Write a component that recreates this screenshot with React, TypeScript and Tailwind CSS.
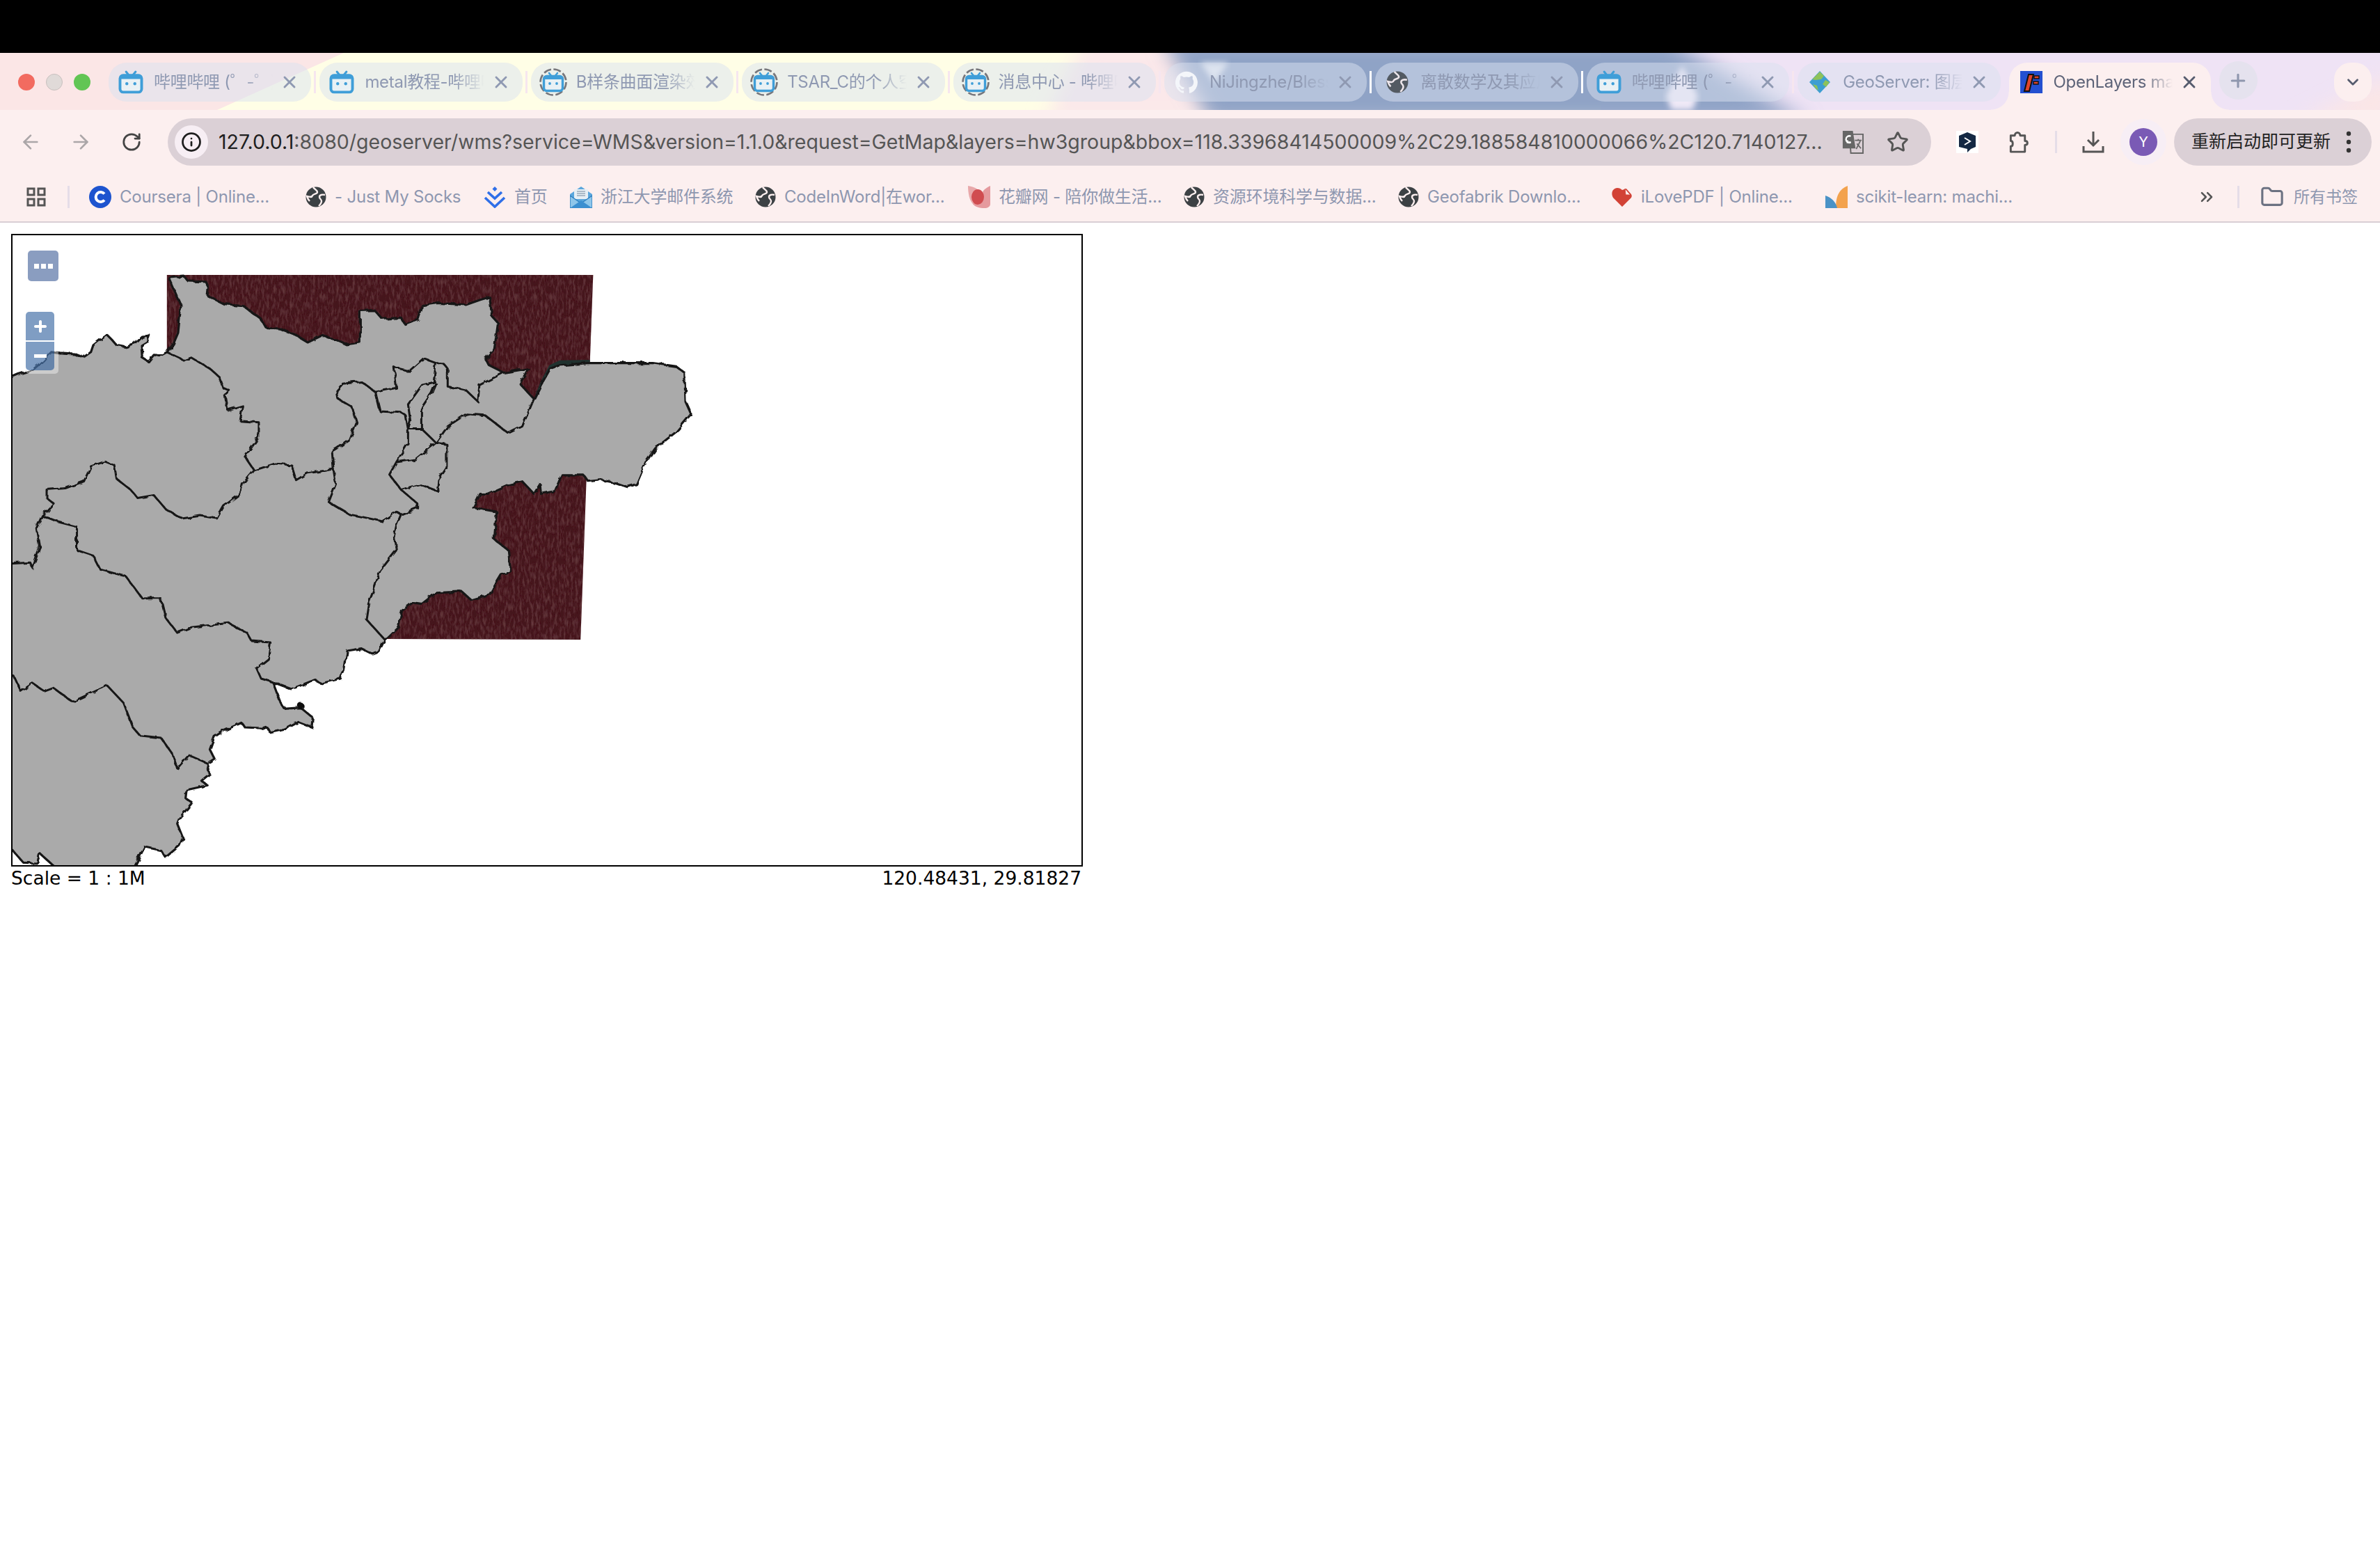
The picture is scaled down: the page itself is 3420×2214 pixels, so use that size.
import { ArrowLeft, ArrowRight, ChevronDown, ChevronsRight, Folder, Info, Plus, RotateCw, Star, X } from 'lucide-react';

const z5 = (s: string) =>
  s.split(' ').map((p) => {
    const [x, y] = p.split(',').map(Number);
    return `${(x / 1.4933).toFixed(1)},${(320 + y / 2.529).toFixed(1)}`;
  });

const z6 = (s: string) =>
  s.split(' ').map((p) => {
    const [x, y] = p.split(',').map(Number);
    return `${(x / 1.4933).toFixed(1)},${(800 + y / 3).toFixed(1)}`;
  });

const toPath = (pts: string[], close = false) => `M${pts.join(' L')}${close ? ' Z' : ''}`;

const landOutline = [
  ...z5(
    '5,575 40,550 70,535 90,505 110,470 130,475 160,478 178,490 195,470 200,445 215,425 230,408 240,425 250,445 270,452 290,440 305,415 322,412 318,430 303,445 305,490 318,505 330,480 345,482 358,470 372,440 382,400 385,350 388,300 375,250 362,200 395,195 402,210 440,212 447,235 445,265 480,295 520,300 560,350 570,380 600,385 630,405 660,435 690,410 720,425 742,442 772,435 772,320 803,318 820,350 860,345 868,368 895,350 905,300 940,292 1000,298 1030,280 1050,270 1055,340 1068,365 1060,460 1040,495 1050,520 1080,545 1133,530 1115,585 1145,640 1160,590 1180,530 1200,518 1260,510 1400,510 1450,522 1468,545 1470,650 1482,695 1450,760 1405,820 1385,870 1365,950 1345,960 1320,945 1290,935 1262,940 1250,915 1205,915 1190,975 1160,985 1158,950 1145,985 1120,940 1085,955 1045,985 1030,985 1015,1035 1065,1050 1060,1150 1090,1190 1095,1270 1075,1280 1050,1350 1010,1370 990,1340 935,1345 905,1385 885,1380 862,1410 855,1465 825,1515',
  ),
  ...z6(
    '812,410 800,420 775,395 745,405 738,490 730,525 690,545 675,530 625,570 585,540 600,620 610,655 645,650 672,695 670,735 640,712 610,745 580,758 575,740 525,735 518,715 480,750 460,775 450,830 460,870 445,890 450,935 432,965 445,985 400,1005 398,1040 412,1060 400,1090 385,1125 380,1150 392,1210 385,1245 355,1295 345,1265 310,1250 285,1350 125,1350 85,1278 80,1320 50,1318 25,1260 5,1255',
  ),
];

const borders = [
  z5('358,470 395,500 410,490 430,510 450,530 470,560 478,600 492,610 482,625 488,680 520,665 515,720 555,725 555,780 525,850 545,900'),
  z5('545,900 520,950 515,985 480,1030 465,1075 430,1065 390,1075 355,1040 330,990 295,1000 280,970 250,930 245,880 225,868 195,885 180,940 140,965 100,970 100,1000 115,1020 90,1065 78,1110 85,1180 70,1255 65,1235 5,1240'),
  [
    ...z5('90,1065 120,1085 165,1105 165,1190 200,1210 215,1260 270,1285 305,1365 345,1365 355,1435 380,1490 410,1470 490,1455 530,1490 540,1520 580,1525'),
    ...z6('575,440 550,480 560,525 585,540'),
  ],
  z6('5,505 30,515 45,580 70,545 95,580 115,565 155,625 230,555 265,630 285,735 300,770 345,780 370,850 380,912 405,855 445,890'),
  z5('545,900 590,875 625,880 635,935 660,910 700,900 715,895 712,830 750,790 765,725 755,670 725,640 722,610 735,585 775,578 805,615 850,600 845,525 880,540 910,495 935,510 950,510 960,530 960,595 1000,610 1025,650 1028,590 1080,545'),
  z5('715,895 720,950 705,1015 750,1060 780,1070 820,1085 850,1050 860,1060 895,1035 895,1020 860,970 835,915 850,870 890,860 935,800'),
  z5('860,1060 850,1100 845,1140 850,1190 815,1265 800,1340 790,1385 785,1440 825,1515'),
  z5('850,870 875,800 875,750 870,700 860,690 815,685 805,615'),
  z5('935,510 930,580 905,590 875,660 880,720 875,750 905,750 905,670 925,620 935,580'),
  z5('905,750 935,800 960,740 1000,695 1040,700 1090,765 1120,740 1145,640'),
  z5('935,800 958,805 958,890 940,935 938,975 900,950 860,970'),
];

function MapDrawing() {
  const raster = z5('358,190 1272,190 1265,510 1258,915 1245,1515 830,1512 358,1512');
  const river = z5('1145,640 1160,575 1178,518 1200,500 1265,498 1265,515 1190,525');
  return (
    <svg className="absolute inset-0 w-full h-full" viewBox="18 338 1535 905" preserveAspectRatio="none">
      <defs>
        <filter id="grain" x="0" y="0" width="100%" height="100%">
          <feTurbulence type="fractalNoise" baseFrequency="0.3 0.09" numOctaves="3" seed="4" />
          <feColorMatrix values="0 0 0 0 0.2  0 0 0 0 0.07  0 0 0 0 0.08  0 0 0 1.1 -0.45" />
          <feComposite in2="SourceGraphic" operator="in" />
          <feMerge>
            <feMergeNode in="SourceGraphic" />
            <feMergeNode />
          </feMerge>
        </filter>
        <filter id="wobble" x="-2%" y="-2%" width="104%" height="104%">
          <feTurbulence type="fractalNoise" baseFrequency="0.09" numOctaves="2" seed="7" result="n" />
          <feDisplacementMap in="SourceGraphic" in2="n" scale="6" />
          <feGaussianBlur stdDeviation="0.7" />
        </filter>
      </defs>
      <path d={toPath(raster, true)} fill="#44171e" filter="url(#grain)" />
      <path d={toPath(river, true)} fill="#20322f" />
      <g filter="url(#wobble)">
        <path d={toPath(landOutline, true)} fill="#aaaaaa" stroke="#161616" strokeWidth="3.2" strokeLinejoin="round" />
        {borders.map((b, i) => (
          <path key={i} d={toPath(b)} fill="none" stroke="#161616" strokeWidth="3" strokeLinejoin="round" />
        ))}
        <circle cx="432" cy="1014" r="4.5" fill="#111" />
      </g>
    </svg>
  );
}

function TvIcon({ ring = false }: { ring?: boolean }) {
  return (
    <svg viewBox="0 0 40 40" className={ring ? 'w-[40px] h-[40px] shrink-0' : 'w-[46px] h-[46px] shrink-0'}>
      {ring && (
        <circle cx="20" cy="20" r="18.5" fill="none" stroke="#77777c" strokeWidth="2.6" strokeDasharray="11 3.5" />
      )}
      <path d="M14 7l4 5M26 7l-4 5" stroke="#3f9ed8" strokeWidth="2.6" strokeLinecap="round" />
      <rect x="6.5" y="11.5" width="27" height="21" rx="4" fill="#e9f1f5" stroke="#3f9ed8" strokeWidth="3.4" />
      <rect x="6" y="11" width="28" height="5" rx="2.5" fill="#3f9ed8" />
      <circle cx="15" cy="22" r="1.9" fill="#3f9ed8" />
      <circle cx="25" cy="22" r="1.9" fill="#3f9ed8" />
    </svg>
  );
}

function GlobeIcon({ size = 'w-[30px] h-[30px]' }: { size?: string }) {
  return (
    <svg viewBox="0 0 30 30" className={`${size} shrink-0`}>
      <circle cx="15" cy="15" r="14.5" fill="#3c4144" />
      <path d="M11 1c2 3 6 4 6 7s-6 2-7 5-4 2-8 1c1 3 2 5 4 7" fill="none" stroke="#fcefef" strokeWidth="2.4" />
      <path d="M28 12c-4-1-8 0-8 3s3 3 3 6-2 5-4 7" fill="none" stroke="#fcefef" strokeWidth="2.4" />
    </svg>
  );
}

function GithubIcon() {
  return (
    <svg viewBox="0 0 24 24" className="w-[32px] h-[32px] shrink-0" fill="#f4f6fa">
      <path d="M12 .5a12 12 0 0 0-3.8 23.4c.6.1.8-.3.8-.6v-2.2c-3.3.7-4-1.400-4-1.400-.5-1.400-1.300-1.800-1.300-1.800-1.100-.7.1-.7.1-.7 1.200.1 1.800 1.200 1.800 1.200 1.100 1.800 2.800 1.300 3.500 1 .1-.8.4-1.300.8-1.600-2.700-.3-5.500-1.300-5.500-5.900 0-1.300.5-2.400 1.200-3.200-.1-.3-.5-1.500.1-3.200 0 0 1-.3 3.300 1.200a11.500 11.500 0 0 1 6 0c2.300-1.500 3.300-1.200 3.300-1.200.6 1.700.2 2.900.1 3.200.8.800 1.200 1.900 1.200 3.200 0 4.600-2.800 5.600-5.500 5.900.4.400.8 1.100.8 2.200v3.300c0 .3.200.7.800.6A12 12 0 0 0 12 .5z" />
    </svg>
  );
}

function GeoServerIcon() {
  return (
    <svg viewBox="0 0 32 32" className="w-[32px] h-[32px] shrink-0">
      <path d="M16 0l15 16-15 16L1 16z" fill="#3d9ed2" />
      <path d="M16 1l6 6-4 5-8 1-5-1zM24 13l6 3-5 7-5-4zM6 19l6 2 2 7-4-3z" fill="#8ec25a" />
    </svg>
  );
}

function OpenLayersIcon() {
  return (
    <svg viewBox="0 0 32 32" className="w-[32px] h-[32px] shrink-0">
      <rect width="32" height="32" fill="#2450d0" />
      <path d="M6 29l6-24h7l-6 24z" fill="#e0452a" stroke="#111" strokeWidth="2" />
      <path d="M20 7h7v4h-7zM19 15h7v4h-7z" fill="#e0452a" stroke="#111" strokeWidth="1.400" />
    </svg>
  );
}

function CourseraIcon() {
  return (
    <svg viewBox="0 0 32 32" className="w-[32px] h-[32px] shrink-0">
      <circle cx="16" cy="16" r="16" fill="#1d54cf" />
      <path d="M22 11.500a7 7 0 1 0 0 9" fill="none" stroke="#fff" strokeWidth="4" />
    </svg>
  );
}

function HomeMarkIcon() {
  return (
    <svg viewBox="0 0 32 32" className="w-[32px] h-[32px] shrink-0">
      <path d="M16 1l3.500 3.500L16 8l-3.500-3.500z" fill="#2f6fe8" />
      <path d="M6 9l10 9 10-9M2 17l14 13 14-13" fill="none" stroke="#2f6fe8" strokeWidth="3.600" />
    </svg>
  );
}

function MailIcon() {
  return (
    <svg viewBox="0 0 32 32" className="w-[32px] h-[32px] shrink-0">
      <path d="M0 12L16 1l16 11v20H0z" fill="#5aa6dc" />
      <rect x="6" y="5" width="20" height="14" fill="#e6eff5" />
      <path d="M10 8h12M10 11h12M10 14h12" stroke="#99a9b8" strokeWidth="1.400" />
      <path d="M0 14l16 11 16-11v18H0z" fill="#8fc6ea" stroke="#2a7ec0" strokeWidth="1.400" />
      <path d="M0 32l16-11 16 11z" fill="#3c8fd0" />
    </svg>
  );
}

function PetalIcon() {
  return (
    <svg viewBox="0 0 32 32" className="w-[32px] h-[32px] shrink-0">
      <path d="M0 0c10 1 20 8 24 14S10 25 8 27C2 22 0 10 0 0z" fill="#e8a8aa" />
      <path d="M32 0v26c0 4-4 6-8 6-8 0-14-2-17-6 10-6 14-12 14-16 0-4 7-8 11-10z" fill="#e59a9e" />
      <ellipse cx="14" cy="16" rx="9" ry="11" fill="#d04c50" />
    </svg>
  );
}

function HeartIcon() {
  return (
    <svg viewBox="0 0 30 28" className="w-[30px] h-[28px] shrink-0">
      <path d="M15 28L2 15C-2 8 2 1 8 1c3 0 5 1 7 3l6-2 7 8c1 2 1 3 0 5z" fill="#d24236" />
      <path d="M19 2l8 9h-7z" fill="#fcefef" stroke="#d24236" strokeWidth="1" />
    </svg>
  );
}

function SklearnIcon() {
  return (
    <svg viewBox="0 0 32 32" className="w-[32px] h-[32px] shrink-0">
      <path d="M32 0C20 5 15 14 15 32h17z" fill="#f3a24d" />
      <path d="M0 14c9 3 15 9 17 18H0z" fill="#4a92c6" />
    </svg>
  );
}

function TranslateIcon() {
  return (
    <svg viewBox="0 0 34 34" className="w-[33px] h-[33px] shrink-0">
      <path d="M12 5h20v28H14z" fill="#dbd0d6" stroke="#666" strokeWidth="2" />
      <path d="M2 0h15l4 26H2z" fill="#666" />
      <path d="M14 8a5 5 0 1 0 0 9h-5v-3" fill="none" stroke="#fff" strokeWidth="2.400" />
      <path d="M20 14h10M25 12v3M22 27l6-12M23 19l6 7" fill="none" stroke="#666" strokeWidth="1.800" />
    </svg>
  );
}

function ShieldIcon() {
  return (
    <svg viewBox="0 0 32 32" className="w-[32px] h-[32px] shrink-0">
      <rect width="32" height="32" rx="1" fill="#fff" />
      <path d="M16 2l12 5v16l-7 3-5 5v-5L4 23V7z" fill="#142843" />
      <path d="M12 10l8 5-8 5" fill="none" stroke="#fff" strokeWidth="2" />
    </svg>
  );
}

function PuzzleIcon() {
  return (
    <svg viewBox="0 0 32 34" className="ml-[42px] w-[32px] h-[33px] shrink-0" fill="none" stroke="#555" strokeWidth="3">
      <path d="M4 7h6c0-6 8-6 8 0h7v8c5 0 5 6 0 6v10H4v-8c4 0 4-8 0-8z" strokeLinejoin="round" />
    </svg>
  );
}

function DownloadTray() {
  return (
    <svg viewBox="0 0 32 32" className="w-[32px] h-[32px] shrink-0" fill="none" stroke="#555" strokeWidth="3">
      <path d="M16 1v20M8 13l8 8 8-8" />
      <path d="M2 22v8h28v-8" />
    </svg>
  );
}

type Tab = { title: string; icon: React.ReactNode; sep: string };

const tabs: Tab[] = [
  { title: '哔哩哔哩 (゜-゜)つロ 干杯', icon: <TvIcon />, sep: 'bg-[#f6e6ef]' },
  { title: 'metal教程-哔哩哔哩', icon: <TvIcon />, sep: 'bg-[#f6e6ef]' },
  { title: 'B样条曲面渲染效果', icon: <TvIcon ring />, sep: 'bg-[#f6e6ef]' },
  { title: 'TSAR_C的个人空间', icon: <TvIcon ring />, sep: 'bg-[#f6e6ef]' },
  { title: '消息中心 - 哔哩哔哩', icon: <TvIcon ring />, sep: 'bg-[#f6e6ef]' },
  { title: 'NiJingzhe/BlessedBlender', icon: <GithubIcon />, sep: 'bg-white' },
  { title: '离散数学及其应用', icon: <GlobeIcon size="w-[32px] h-[32px] opacity-80" />, sep: 'bg-white' },
  { title: '哔哩哔哩 (゜-゜)つロ 干杯', icon: <TvIcon />, sep: 'bg-[#f6e6ef]' },
  { title: 'GeoServer: 图层预览', icon: <GeoServerIcon />, sep: 'bg-transparent' },
];

const bookmarks = [
  { label: 'Coursera | Online...', icon: <CourseraIcon />, width: 'w-[311px]' },
  { label: '- Just My Socks', icon: <GlobeIcon />, width: 'w-[256px]' },
  { label: '首页', icon: <HomeMarkIcon />, width: 'w-[124px]' },
  { label: '浙江大学邮件系统', icon: <MailIcon />, width: 'w-[266px]' },
  { label: 'CodeInWord|在wor...', icon: <GlobeIcon />, width: 'w-[306px]' },
  { label: '花瓣网 - 陪你做生活...', icon: <PetalIcon />, width: 'w-[310px]' },
  { label: '资源环境科学与数据...', icon: <GlobeIcon />, width: 'w-[308px]' },
  { label: 'Geofabrik Downlo...', icon: <GlobeIcon />, width: 'w-[307px]' },
  { label: 'iLovePDF | Online...', icon: <HeartIcon />, width: 'w-[307px]' },
  { label: 'scikit-learn: machi...', icon: <SklearnIcon />, width: 'w-[534px]' },
];

function TabStripArt() {
  return (
    <svg className="absolute inset-0 w-full h-full" viewBox="0 0 3420 82" preserveAspectRatio="none">
      <defs>
        <filter id="soft" x="-10%" y="-50%" width="120%" height="200%">
          <feGaussianBlur stdDeviation="14" />
        </filter>
        <filter id="softer" x="-10%" y="-50%" width="120%" height="200%">
          <feGaussianBlur stdDeviation="4" />
        </filter>
      </defs>
      <rect width="3420" height="82" fill="#fffee6" />
      <polygon points="0,0 494,0 312,82 0,82" fill="#fbe6e6" />
      <polygon points="1560,-20 2000,-20 2000,100 1500,100" fill="#fbe8ea" filter="url(#soft)" />
      <polygon points="2300,-20 3440,-20 3440,100 2300,100" fill="#efe3f5" />
      <polygon points="1670,-20 2395,-20 2600,100 1740,100" fill="#8fa3c6" filter="url(#soft)" />
      <polygon points="3300,100 3440,30 3440,100" fill="#fbe6e6" filter="url(#soft)" />
      <polygon points="1725,14 1765,14 1745,44" fill="#dfe5ef" filter="url(#softer)" />
      <polygon points="2417,18 2440,62 2432,82 2402,82 2394,62" fill="#efe9f7" filter="url(#softer)" />
    </svg>
  );
}

export default function App() {
  return (
    <div className="min-h-[2214px] bg-white [font-family:Inter,'Noto_Sans_CJK_SC',sans-serif]">
      <div className="h-[76px] bg-black" />

      <div className="relative h-[82px] overflow-hidden">
        <TabStripArt />
        <div className="relative flex items-start pt-[14px] pl-[26px]">
          <div className="flex gap-[16px] h-[56px] items-center mr-[26px]">
            <span className="w-[24px] h-[24px] rounded-full bg-[#f26b60]" />
            <span className="w-[24px] h-[24px] rounded-full bg-[#e0dad8] border border-[#c8c0be]" />
            <span className="w-[24px] h-[24px] rounded-full bg-[#62c554]" />
          </div>
          {tabs.map((t, i) => (
            <div key={i} className="flex items-center">
              <div className="flex items-center w-[291.4px] h-[56px] rounded-[26px] bg-[#dae1f0]/50 pl-[12px] pr-[17px]">
                <div className="w-[40px] flex justify-center shrink-0">{t.icon}</div>
                <span className="ml-[13px] flex-1 overflow-hidden whitespace-nowrap text-[24px] tracking-[-0.3px] text-[#8f99b2] [mask-image:linear-gradient(to_right,black_75%,transparent)]">
                  {t.title}
                </span>
                <X className="ml-[10px] w-[28px] h-[28px] shrink-0 text-[#8f99b2]" strokeWidth={2.5} />
              </div>
              <span className={`ml-[4px] mr-[5px] w-[3px] h-[32px] ${t.sep}`} />
            </div>
          ))}
          <div className="relative flex items-center w-[290px] h-[68px] rounded-t-[26px] bg-[#fcefef] pl-[16px] pr-[17px]">
            <span className="absolute -left-[26px] bottom-0 w-[26px] h-[26px] bg-[radial-gradient(circle_at_0_0,transparent_25px,#fcefef_26px)]" />
            <span className="absolute -right-[26px] bottom-0 w-[26px] h-[26px] bg-[radial-gradient(circle_at_100%_0,transparent_25px,#fcefef_26px)]" />
            <div className="flex items-center w-full h-[56px] -mt-[12px]">
              <OpenLayersIcon />
              <span className="ml-[16px] flex-1 overflow-hidden whitespace-nowrap text-[24px] tracking-[-0.3px] text-[#5d6378] [mask-image:linear-gradient(to_right,black_75%,transparent)]">
                OpenLayers map preview
              </span>
              <X className="ml-[10px] w-[28px] h-[28px] shrink-0 text-[#565c6e]" strokeWidth={2.5} />
            </div>
          </div>
          <div className="ml-[12px] -mt-[2px] flex items-center justify-center w-[55px] h-[55px] rounded-full bg-[#e5e2ee]">
            <Plus className="w-[30px] h-[30px] text-[#8f97ae]" strokeWidth={2.5} />
          </div>
          <div className="ml-[110px] flex items-center justify-center w-[54px] h-[56px] rounded-[24px] bg-[#fcefef]">
            <ChevronDown className="w-[26px] h-[26px] text-[#565c6e]" strokeWidth={2.5} />
          </div>
        </div>
      </div>

      <div className="bg-[#fcefef] h-[162px] border-b-2 border-[#d9cfd5]">
        <div className="flex items-center h-[68px] pt-[12px] box-content pl-[28px] pr-[12px]">
          <ArrowLeft className="w-[32px] h-[32px] text-[#aba6a8]" strokeWidth={2} />
          <ArrowRight className="ml-[40px] w-[32px] h-[32px] text-[#aba6a8]" strokeWidth={2} />
          <RotateCw className="ml-[42px] w-[30px] h-[30px] text-[#444]" strokeWidth={2.2} />
          <div className="ml-[37px] flex items-center w-[2535px] h-[68px] rounded-full bg-[#dbd0d6]">
            <div className="ml-[10px] flex items-center justify-center w-[48px] h-[48px] rounded-full bg-[#f7eef4]">
              <Info className="w-[30px] h-[30px] text-[#1e1e1e]" strokeWidth={2.2} />
            </div>
            <span className="ml-[15px] w-[2310px] whitespace-nowrap overflow-hidden text-[28.5px] text-[#555]">
              <span className="text-[#1f1f1f]">127.0.0.1</span>:8080/geoserver/wms?service=WMS&amp;version=1.1.0&amp;request=GetMap&amp;layers=hw3group&amp;bbox=118.33968414500009%2C29.188584810000066%2C120.7140127...
            </span>
            <div className="ml-auto mr-[32px] flex items-center gap-[32px]">
              <TranslateIcon />
              <Star className="w-[32px] h-[32px] text-[#555]" strokeWidth={2.2} />
            </div>
          </div>
          <div className="ml-[36px]"><ShieldIcon /></div>
          <PuzzleIcon />
          <span className="ml-[36px] w-[3px] h-[32px] bg-[#e5dde8]" />
          <div className="ml-[36px]"><DownloadTray /></div>
          <div className="ml-[23px] flex items-center justify-center w-[66px] h-[66px] rounded-full bg-[#f7eef5]">
            <div className="flex items-center justify-center w-[40px] h-[40px] rounded-full bg-[#7a5ab5] text-[20px] text-white">Y</div>
          </div>
          <div className="ml-[11px] flex items-center w-[284px] h-[68px] rounded-full bg-[#dbd0d6] pl-[25px]">
            <span className="text-[25px] text-[#222] whitespace-nowrap">重新启动即可更新</span>
            <svg viewBox="0 0 8 32" className="ml-[22px] w-[8px] h-[32px]" fill="#333">
              <circle cx="4" cy="4" r="3.200" />
              <circle cx="4" cy="16" r="3.200" />
              <circle cx="4" cy="28" r="3.200" />
            </svg>
          </div>
        </div>

        <div className="flex items-center h-[64px] mt-[13px] pl-[38px]">
          <svg viewBox="0 0 28 28" className="w-[28px] h-[28px] shrink-0" fill="none" stroke="#555" strokeWidth="3">
            <rect x="2" y="2" width="9" height="9" />
            <rect x="17" y="2" width="9" height="9" />
            <rect x="2" y="17" width="9" height="9" />
            <rect x="17" y="17" width="9" height="9" />
          </svg>
          <span className="ml-[31px] mr-[28px] w-[3px] h-[32px] bg-[#e5dde8]" />
          {bookmarks.map((b) => (
            <div key={b.label} className={`flex items-center shrink-0 ${b.width}`}>
              {b.icon}
              <span className="ml-[12px] whitespace-nowrap text-[24px] tracking-[-0.2px] text-[#8e97b0]">{b.label}</span>
            </div>
          ))}
          <ChevronsRight className="w-[28px] h-[28px] text-[#555]" strokeWidth={2.2} />
          <span className="ml-[30px] w-[3px] h-[32px] bg-[#e5dde8]" />
          <Folder className="ml-[30px] w-[34px] h-[34px] text-[#6c7282]" strokeWidth={2.2} />
          <span className="ml-[14px] whitespace-nowrap text-[23px] text-[#8e97b0]">所有书签</span>
        </div>
      </div>

      <div className="pt-[16px] pl-[16px] w-[1556px] [font-family:'DejaVu_Sans',sans-serif] text-[26.5px] text-black">
        <div className="relative h-[909px] border-2 border-black overflow-hidden bg-white">
          <MapDrawing />
          <div className="absolute left-[22px] top-[22px] flex items-center justify-center gap-[3px] w-[44px] h-[44px] rounded-[5px] bg-[#8a9dc0]">
            <span className="w-[7px] h-[7px] bg-white" />
            <span className="w-[7px] h-[7px] bg-white" />
            <span className="w-[7px] h-[7px] bg-white" />
          </div>
          <div className="absolute left-[19px] top-[110px] w-[47px] h-[89px] rounded-[5px] bg-white/40">
            <div className="flex items-center justify-center w-[41px] h-[41px] rounded-t-[5px] bg-[#003c88]/50 text-white">
              <Plus className="w-[24px] h-[24px]" strokeWidth={4} />
            </div>
            <div className="mt-[2px] flex items-center justify-center w-[41px] h-[41px] rounded-b-[5px] bg-[#003c88]/50 text-white">
              <span className="w-[18px] h-[5px] bg-white" />
            </div>
          </div>
        </div>
        <div className="flex justify-between leading-[34px] pr-[2px]">
          <span>Scale = 1 : 1M</span>
          <span>120.48431, 29.81827</span>
        </div>
      </div>
    </div>
  );
}
